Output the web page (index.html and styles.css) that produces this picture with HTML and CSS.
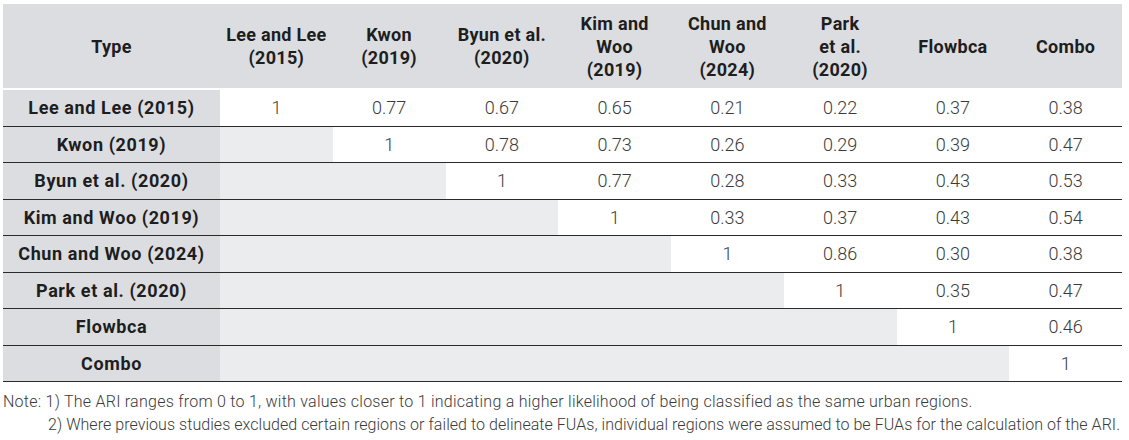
FILE: index.html
```html
<!DOCTYPE html>
<html lang="en">
<head>
<meta charset="utf-8">
<title>ARI comparison</title>
<link rel="stylesheet" href="styles.css">
</head>
<body>
<div class="wrap">
<table class="ari">
  <colgroup>
    <col class="c-type">
    <col span="8" class="c-val">
  </colgroup>
  <thead>
    <tr>
      <th>Type</th>
      <th>Lee and Lee<br>(2015)</th>
      <th>Kwon<br>(2019)</th>
      <th>Byun et al.<br>(2020)</th>
      <th>Kim and<br>Woo<br>(2019)</th>
      <th>Chun and<br>Woo<br>(2024)</th>
      <th>Park<br>et al.<br>(2020)</th>
      <th>Flowbca</th>
      <th>Combo</th>
    </tr>
  </thead>
  <tbody>
    <tr><th>Lee and Lee (2015)</th><td>1</td><td>0.77</td><td>0.67</td><td>0.65</td><td>0.21</td><td>0.22</td><td>0.37</td><td>0.38</td></tr>
    <tr><th>Kwon (2019)</th><td class="e"></td><td>1</td><td>0.78</td><td>0.73</td><td>0.26</td><td>0.29</td><td>0.39</td><td>0.47</td></tr>
    <tr><th>Byun et al. (2020)</th><td class="e" colspan="2"></td><td>1</td><td>0.77</td><td>0.28</td><td>0.33</td><td>0.43</td><td>0.53</td></tr>
    <tr><th>Kim and Woo (2019)</th><td class="e" colspan="3"></td><td>1</td><td>0.33</td><td>0.37</td><td>0.43</td><td>0.54</td></tr>
    <tr><th>Chun and Woo (2024)</th><td class="e" colspan="4"></td><td>1</td><td>0.86</td><td>0.30</td><td>0.38</td></tr>
    <tr><th>Park et al. (2020)</th><td class="e" colspan="5"></td><td>1</td><td>0.35</td><td>0.47</td></tr>
    <tr><th>Flowbca</th><td class="e" colspan="6"></td><td>1</td><td>0.46</td></tr>
    <tr><th>Combo</th><td class="e" colspan="7"></td><td>1</td></tr>
  </tbody>
</table>
<div class="notes">
  <p class="first">Note: 1) The ARI ranges from 0 to 1, with values closer to 1 indicating a higher likelihood of being classified as the same urban regions.</p>
  <p class="indent">2) Where previous studies excluded certain regions or failed to delineate FUAs, individual regions were assumed to be FUAs for the calculation of the ARI.</p>
</div>
</div>
</body>
</html>
```

FILE: styles.css
```css
html, body {
  margin: 0;
  padding: 0;
  background: #ffffff;
}
.wrap {
  padding: 4px 7px 0 3px;
  font-family: Roboto, "Liberation Sans", sans-serif;
}
.ari {
  width: 1119px;
  border-collapse: collapse;
  table-layout: fixed;
}
.c-type { width: 217px; }
.c-val { width: 112.75px; }
.ari thead th {
  height: 84px;
  padding: 0;
  background: #dcdde0;
  color: #1e1e1e;
  font-size: 18px;
  font-weight: 700;
  line-height: 23px;
  letter-spacing: 0.3px;
  text-align: center;
  vertical-align: middle;
  border-bottom: 2px solid #ffffff;
}
.ari tbody th,
.ari tbody td {
  height: 35.5px;
  padding: 0;
  text-align: center;
  vertical-align: middle;
  border-bottom: 1px solid #2a2a2a;
}
.ari tbody th {
  background: #dcdde0;
  color: #1e1e1e;
  font-size: 18px;
  font-weight: 700;
  letter-spacing: 0.6px;
}
.ari tbody td {
  background: #ffffff;
  color: #3a3a3a;
  font-size: 18px;
  font-weight: 300;
}
.ari tbody td.e {
  background: #ebecee;
}
.notes {
  margin-top: 8px;
  color: #3a3a3a;
  font-size: 16px;
  font-weight: 300;
  line-height: 23px;
}
.notes p {
  margin: 0;
  white-space: nowrap;
}
.notes .first {
  letter-spacing: 0.25px;
}
.notes .indent {
  padding-left: 45px;
  letter-spacing: 0.05px;
}
```
